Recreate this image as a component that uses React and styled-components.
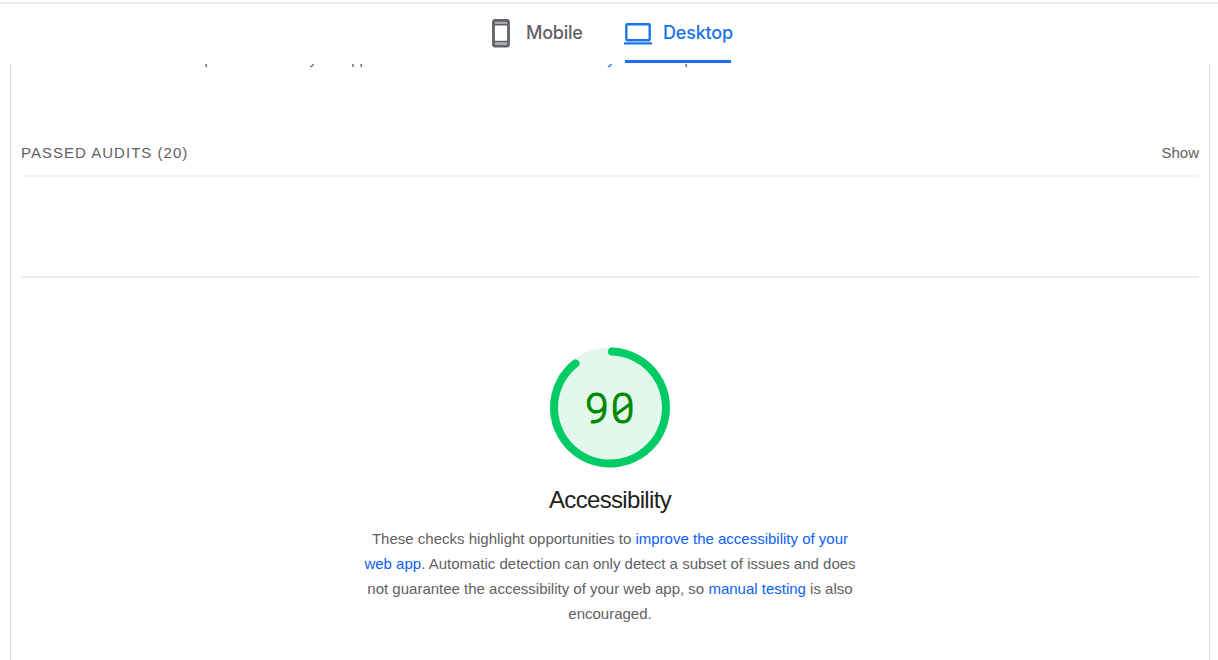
import React from "react";
import styled, { createGlobalStyle } from "styled-components";

const GlobalStyle = createGlobalStyle`
  * { box-sizing: border-box; }
  body {
    margin: 0;
    background: #fff;
    font-family: "Liberation Sans", Arial, sans-serif;
    overflow: hidden;
  }
`;

const Page = styled.div`
  display: flex;
  flex-direction: column;
  height: 660px;
  padding-top: 2px;
  overflow: hidden;
`;

const TabBar = styled.nav`
  flex: none;
  display: flex;
  gap: 43px;
  height: 62px;
  padding-left: 492px;
  border-top: 2px solid #ebebeb;
  background: #fff;
`;

const Tab = styled.button`
  display: flex;
  align-items: flex-start;
  gap: ${(p) => p.$gap}px;
  height: 60px;
  margin: 0;
  padding: 15px 0 0;
  border: 0;
  background: linear-gradient(#1a73e8, #1a73e8) no-repeat 1px 56px / ${(p) => (p.$active ? "106px 3px" : "0 0")};
  color: ${(p) => (p.$active ? "#1a73e8" : "#5f6368")};
  font: 500 18px/28px Inter, sans-serif;
  white-space: nowrap;
`;

const TabLabel = styled.span`
  width: ${(p) => p.$width}px;
  letter-spacing: ${(p) => p.$spacing}px;
  text-align: left;
`;

const Report = styled.main`
  flex: 1;
  display: flex;
  flex-direction: column;
  width: 1200px;
  min-height: 0;
  margin-left: 10px;
  padding: 0 10px;
  border: solid #dadada;
  border-width: 0 1px;
  overflow: hidden;
`;

const Description = styled.p`
  flex: none;
  margin: -14px 0 0;
  color: #616161;
  font-size: 15px;
  line-height: 18px;
  white-space: nowrap;
`;

const Link = styled.a`
  color: #0c61f7;
`;

const PassedAudits = styled.section`
  flex: none;
  display: flex;
  justify-content: space-between;
  width: 1178px;
  height: 42px;
  margin-top: 67px;
  padding-top: 8px;
  border-bottom: 2px solid #f3f3f3;
  color: #616161;
  font-size: 15px;
  line-height: 20px;
`;

const AuditTitle = styled.span`
  letter-spacing: 1.02px;
`;

const Category = styled.section`
  flex: none;
  display: flex;
  flex-direction: column;
  align-items: center;
  margin-top: 99px;
  padding-top: 70px;
  border-top: 2px solid #ebebeb;
`;

const Gauge = styled.svg`
  display: block;
  width: 120px;
  height: 120px;
  overflow: visible;
`;

const Score = styled.text`
  fill: #008800;
  stroke: #008800;
  stroke-width: 1.1px;
  font-family: Roboto, sans-serif;
  font-size: 42px;
  font-weight: 300;
`;

const CategoryTitle = styled.h2`
  margin: 15px 0 0;
  color: #212121;
  font-size: 24px;
  font-weight: 400;
  line-height: 34px;
  letter-spacing: -0.66px;
`;

const Explanation = styled.p`
  width: 500px;
  margin: 9px 0 0;
  color: #616161;
  font-size: 15px;
  line-height: 25px;
  text-align: center;
  white-space: nowrap;
`;

function PhoneIcon() {
  return (
    <svg width="18" height="29" viewBox="0 0 18 29" fill="none">
      <rect x="1.5" y="1.5" width="15" height="25.5" rx="1.5" stroke="#5f6368" strokeWidth="2.8" />
      <path d="M3 3.7h12M3 24.6h12" stroke="#a9abad" strokeWidth="2" />
      <path d="M2 5.6h14M2 22.6h14" stroke="#5f6368" strokeWidth="1.8" />
    </svg>
  );
}

function LaptopIcon() {
  return (
    <svg width="28" height="29" viewBox="0 0 28 29" fill="none" stroke="#1a73e8">
      <rect x="2.3" y="5.2" width="23.4" height="16" rx="1" strokeWidth="2.4" />
      <path d="M0 24.4h28" strokeWidth="2.2" />
    </svg>
  );
}

function ScoreGauge() {
  return (
    <Gauge viewBox="0 0.5 120 120">
      <circle cx="60" cy="60" r="60" fill="#e3f8ed" />
      <path
        d="M62 4.04A56 56 0 1 1 25.52 15.88"
        fill="none"
        stroke="#00cc66"
        strokeWidth="8"
        strokeLinecap="round"
      />
      <Score x="35.2 61" y="75.8">90</Score>
      <path d="M65.5 67.2L79.5 57" stroke="#008800" strokeWidth="3" />
    </Gauge>
  );
}

export default function App() {
  return (
    <Page>
      <GlobalStyle />
      <TabBar>
        <Tab $gap={16}>
          <PhoneIcon />
          <TabLabel $width={55} $spacing={-0.25}>Mobile</TabLabel>
        </Tab>
        <Tab $active $gap={11}>
          <LaptopIcon />
          <TabLabel $width={70} $spacing={-0.2}>Desktop</TabLabel>
        </Tab>
      </TabBar>
      <Report>
        <Description>
          More information about the performance of your application. These numbers don't{" "}
          <Link>directly affect</Link> the performance score.
        </Description>
        <PassedAudits>
          <AuditTitle>PASSED AUDITS (20)</AuditTitle>
          <span>Show</span>
        </PassedAudits>
        <Category>
          <ScoreGauge />
          <CategoryTitle>Accessibility</CategoryTitle>
          <Explanation>
            These checks highlight opportunities to <Link>improve the accessibility of your</Link>
            <br />
            <Link>web app</Link>. Automatic detection can only detect a subset of issues and does
            <br />
            not guarantee the accessibility of your web app, so <Link>manual testing</Link> is also
            <br />
            encouraged.
          </Explanation>
        </Category>
      </Report>
    </Page>
  );
}
